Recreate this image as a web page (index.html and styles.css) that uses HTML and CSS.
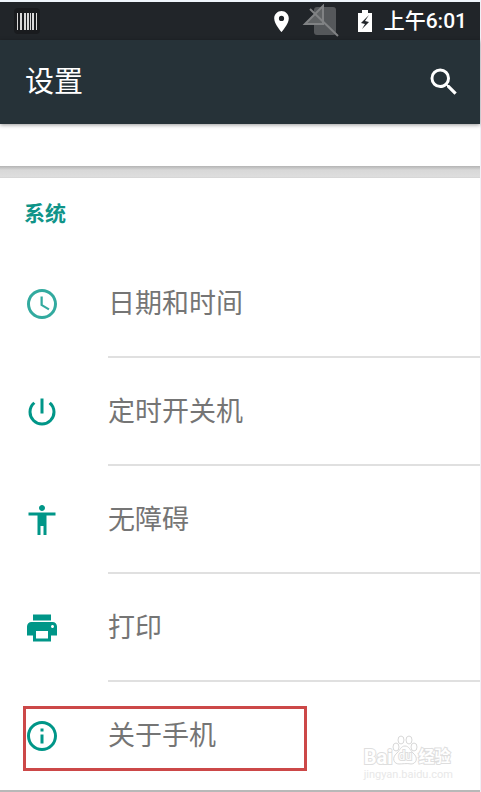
FILE: index.html
```html
<!DOCTYPE html>
<html lang="zh-CN">
<head>
<meta charset="utf-8">
<meta name="viewport" content="width=device-width, initial-scale=1">
<title>设置</title>
<link rel="stylesheet" href="styles.css">
</head>
<body>
<div class="screen">
  <div class="status-bar">
    <svg class="barcode" viewBox="0 0 26 26" aria-hidden="true">
      <rect width="26" height="26" rx="4" fill="#191b1e"/>
      <path d="M3 5h1v17H3zM6 5h2v17H6zM10 5h2v17h-2zM13 5h2v17h-2zM16 5h1v17h-1zM18 5h2v17h-2zM22 5h1v17h-1z" fill="#d8d8d8"/>
    </svg>
    <div class="status-icons">
      <svg class="pin" viewBox="0 0 24 24" aria-hidden="true"><path fill="#fff" d="M12 2C8.13 2 5 5.13 5 9c0 5.25 7 13 7 13s7-7.75 7-13c0-3.87-3.13-7-7-7zm0 9.5a2.5 2.5 0 0 1 0-5 2.5 2.5 0 0 1 0 5z"/></svg>
      <svg class="no-sim" viewBox="0 0 38 34" aria-hidden="true">
        <rect x="13" y="3" width="22" height="28" rx="3" fill="#55585b"/>
        <path d="M4 20 22 2v18z" fill="#606365"/>
        <path d="M4 20 22 2v18zM9 5 37 32" stroke="#808284" stroke-width="2" fill="none"/>
      </svg>
      <svg class="battery" viewBox="0 0 14 22" aria-hidden="true"><path fill="#fff" d="M4 0h6v3h4v19H0V3h4z"/><path fill="#212529" d="M11 5 3 13l4 1-3 5 7-7-4-1z"/></svg>
      <span class="time">上午6:01</span>
    </div>
  </div>
  <header class="app-bar">
    <h1>设置</h1>
    <button class="search" type="button" aria-label="搜索">
      <svg class="icon" viewBox="0 0 24 24" aria-hidden="true"><path d="M15.5 14h-.79l-.28-.27A6.47 6.47 0 0 0 16 9.5 6.5 6.5 0 1 0 9.5 16c1.61 0 3.09-.59 4.23-1.57l.27.28v.79l5 4.99L20.49 19l-4.99-5zm-6 0C7.01 14 5 11.99 5 9.5S7.01 5 9.5 5 14 7.01 14 9.5 11.99 14 9.5 14z"/></svg>
    </button>
  </header>
  <div class="previous-card"></div>
  <div class="gap"></div>
  <main class="card">
    <h2>系统</h2>
    <ul class="list">
      <li><a class="row" href="#date">
        <svg class="icon soft" viewBox="0 0 24 24" aria-hidden="true"><path d="M11.99 2C6.47 2 2 6.48 2 12s4.47 10 9.99 10C17.52 22 22 17.52 22 12S17.52 2 11.99 2zM12 20a8 8 0 1 1 0-16 8 8 0 0 1 0 16z"/><path d="M12.500 7H11v6l5.250 3.150.75-1.230-4.500-2.670z"/></svg>
        <span class="label">日期和时间</span></a></li>
      <li><a class="row" href="#power">
        <svg class="icon" viewBox="0 0 24 24" aria-hidden="true"><path d="M13 3h-2v10h2V3zm4.830 2.170-1.420 1.420A6.920 6.920 0 0 1 19 12a7 7 0 0 1-14 0c0-2.190 1.010-4.140 2.580-5.420L6.170 5.170A8.932 8.932 0 0 0 3 12a9 9 0 0 0 18 0c0-2.740-1.230-5.180-3.170-6.830z"/></svg>
        <span class="label">定时开关机</span></a></li>
      <li><a class="row" href="#accessibility">
        <svg class="icon" viewBox="0 0 24 24" aria-hidden="true"><path d="M12 2c1.100 0 2 .9 2 2s-.9 2-2 2-2-.9-2-2 .9-2 2-2zm9 7h-6v13h-2v-6h-2v6H9V9H3V7h18v2z"/></svg>
        <span class="label">无障碍</span></a></li>
      <li><a class="row" href="#print">
        <svg class="icon" viewBox="0 0 24 24" aria-hidden="true"><path d="M19 8H5c-1.660 0-3 1.340-3 3v6h4v4h12v-4h4v-6c0-1.660-1.340-3-3-3zm-3 11H8v-5h8v5zm3-7c-.55 0-1-.45-1-1s.45-1 1-1 1 .45 1 1-.45 1-1 1zm-1-9H6v4h12V3z"/></svg>
        <span class="label">打印</span></a></li>
      <li class="marked"><a class="row" href="#about">
        <svg class="icon" viewBox="0 0 24 24" aria-hidden="true"><path d="M11 17h2v-6h-2v6zm1-15C6.480 2 2 6.480 2 12s4.480 10 10 10 10-4.480 10-10S17.520 2 12 2zm0 18a8 8 0 1 1 0-16 8 8 0 0 1 0 16zM11 9h2V7h-2v2z"/></svg>
        <span class="label">关于手机</span></a>
        <div class="watermark">
          <div class="brand"><span class="bai">Bai</span><span class="paw"><svg viewBox="0 0 26 30" aria-hidden="true"><g fill="#fff" stroke="#d8d8d8"><ellipse cx="4" cy="12" rx="3" ry="4"/><ellipse cx="9" cy="5" rx="3" ry="4"/><ellipse cx="17" cy="5" rx="3" ry="4"/><ellipse cx="22" cy="12" rx="3" ry="4"/><path d="M13 11c-4 0-5 4-8 7-6 5-3 11 2 11 3 0 8-1 12 0 5 0 8-6 2-11-3-3-4-7-8-7z"/></g></svg><span class="du">du</span></span><span class="exp">经验</span></div>
          <div class="site">jingyan.baidu.com</div>
        </div>
      </li>
    </ul>
  </main>
</div>
</body>
</html>
```
FILE: styles.css
```css
*,
*::after {
  box-sizing: border-box;
}

body {
  margin: 0;
  background: #fff;
  font-family: Roboto, "Noto Sans CJK SC", sans-serif;
}

.screen {
  border-top: 2px solid #eff6fc;
  border-right: 1px solid #f0f0f6;
}

.status-bar {
  display: flex;
  align-items: center;
  justify-content: space-between;
  height: 38px;
  padding: 0 13px 0 14px;
  background: #212529;
}

.barcode {
  width: 26px;
  height: 26px;
}

.status-icons {
  display: flex;
  align-items: center;
}

.pin {
  width: 25px;
  height: 25px;
  margin-right: 7px;
}

.no-sim {
  width: 38px;
  height: 34px;
  margin-right: 19px;
}

.battery {
  width: 14px;
  height: 22px;
  margin-right: 12px;
}

.time {
  color: #fff;
  font-size: 21px;
  font-weight: 500;
  line-height: 38px;
}

.app-bar {
  position: relative;
  display: flex;
  align-items: center;
  justify-content: space-between;
  height: 84px;
  padding: 0 18px 0 25px;
  background: #263238;
  box-shadow: 0 1px 4px rgba(0, 0, 0, 0.4);
}

h1 {
  margin: 0;
  color: #fff;
  font-size: 29px;
  font-weight: 400;
  line-height: 40px;
}

.search {
  display: flex;
  padding: 0;
  border: 0;
  background: none;
}

.icon {
  flex: none;
  width: 36px;
  height: 36px;
  fill: #009688;
}

.soft {
  opacity: 0.8;
}

.search .icon {
  fill: #fff;
}

.previous-card {
  height: 42px;
}

.gap {
  height: 12px;
  background: linear-gradient(#b4b4b4, #d8d8d8 4px, #dedede 11px, #d0d0d0);
}

.card {
  border-bottom: 2px solid #b8b8b8;
}

h2 {
  margin: 0;
  padding: 21px 24px;
  color: #0f9488;
  font-size: 21px;
  font-weight: 700;
  line-height: 30px;
}

.list {
  margin: 0;
  padding: 0;
  list-style: none;
}

.row {
  display: flex;
  align-items: center;
  gap: 48px;
  padding-left: 24px;
  color: #757575;
  font-size: 27px;
  line-height: 40px;
  text-decoration: none;
}

.label {
  flex: 1;
  padding: 34px 0 32px;
  border-bottom: 2px solid #e0e0e0;
}

.marked {
  position: relative;
}

.marked .label {
  border-bottom-color: transparent;
}

.marked::after {
  content: "";
  position: absolute;
  top: 24px;
  left: 23px;
  width: 284px;
  height: 65px;
  border: 3px solid #cc4848;
}

.watermark {
  position: absolute;
  right: 27px;
  bottom: 9px;
  color: #fff;
  -webkit-text-stroke: 2px #dedede;
  paint-order: stroke fill;
}

.brand {
  display: flex;
  align-items: flex-end;
  height: 34px;
  line-height: 24px;
}

.bai {
  font-size: 20px;
  font-weight: 700;
}

.paw {
  position: relative;
  width: 26px;
  height: 34px;
}

.paw svg {
  width: 26px;
  height: 30px;
  paint-order: normal;
}

.du {
  position: absolute;
  bottom: 1px;
  left: 6px;
  font-size: 12px;
}

.exp {
  font-size: 16px;
  font-weight: 700;
}

.site {
  color: #e8e8e8;
  font-size: 11px;
  line-height: 12px;
  -webkit-text-stroke: 0;
}
```
